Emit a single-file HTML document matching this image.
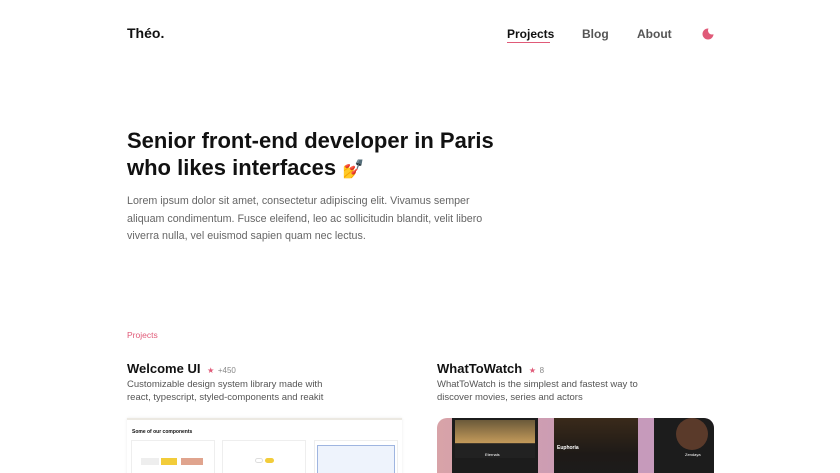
<!DOCTYPE html>
<html><head><meta charset="utf-8"><style>
*{margin:0;padding:0;box-sizing:border-box}
html,body{width:840px;height:473px;overflow:hidden}
body{background:#fff;font-family:"Liberation Sans",sans-serif;color:#111;position:relative}
.a{position:absolute;white-space:nowrap}
.nav{font-size:12px;font-weight:bold;color:#555;top:27px}
</style></head><body>
<div class="a" style="left:127px;top:25px;font-size:14px;font-weight:bold">Théo.</div>
<div class="a nav" style="left:507px;color:#111">Projects</div>
<div class="a" style="left:507px;top:42px;width:43px;height:1px;background:#e05a78"></div>
<div class="a nav" style="left:582px">Blog</div>
<div class="a nav" style="left:637px">About</div>
<svg class="a" style="left:702px;top:27px" width="13" height="13" viewBox="0 0 13 13"><circle cx="6" cy="7" r="5.5" fill="#e05a78"/><circle cx="10" cy="3.5" r="4" fill="#fff"/></svg>
<div class="a" style="left:127px;top:127px;font-size:22px;font-weight:bold;line-height:27px">Senior front-end developer in Paris<br>who likes interfaces <span style="font-size:18px">💅</span></div>
<div class="a" style="left:127px;top:193px;font-size:10.7px;line-height:17.5px;color:#666">Lorem ipsum dolor sit amet, consectetur adipiscing elit. Vivamus semper<br>aliquam condimentum. Fusce eleifend, leo ac sollicitudin blandit, velit libero<br>viverra nulla, vel euismod sapien quam nec lectus.</div>
<div class="a" style="left:127px;top:330px;font-size:8.5px;color:#e05a78">Projects</div>

<div class="a" style="left:127px;top:361px;font-size:13px;font-weight:bold">Welcome UI <span style="font-size:8px;color:#e05a78;font-weight:normal;margin-left:3px">★</span> <span style="font-size:8px;color:#888;font-weight:normal">+450</span></div>
<div class="a" style="left:127px;top:379px;font-size:9.5px;line-height:12.5px;color:#555">Customizable design system library made with<br>react, typescript, styled-components and reakit</div>
<div class="a" style="left:127px;top:418px;width:275px;height:60px;background:#fff;border-top:2px solid #ece9e2;box-shadow:0 0 3px rgba(0,0,0,.08)">
 <div class="a" style="left:5px;top:9px;font-size:5px;font-weight:bold">Some of our components</div>
 <div class="a" style="left:4px;top:20px;width:84px;height:40px;border:1px solid #eee"></div>
 <div class="a" style="left:95px;top:20px;width:84px;height:40px;border:1px solid #eee"></div>
 <div class="a" style="left:187px;top:20px;width:84px;height:40px;border:1px solid #eee"></div>
 <div class="a" style="left:14px;top:38px;width:18px;height:7px;background:#eee"></div>
 <div class="a" style="left:34px;top:38px;width:16px;height:7px;background:#f2cc3a"></div>
 <div class="a" style="left:54px;top:38px;width:22px;height:7px;background:#e0a48e"></div>
 <div class="a" style="left:128px;top:38px;width:8px;height:5px;border:1px solid #ddd;border-radius:3px"></div>
 <div class="a" style="left:138px;top:38px;width:9px;height:5px;background:#f2cc3a;border-radius:3px"></div>
 <div class="a" style="left:190px;top:25px;width:78px;height:35px;background:#eef3fc;border:1px solid #9fb5e0"></div>
</div>

<div class="a" style="left:437px;top:361px;font-size:13px;font-weight:bold">WhatToWatch <span style="font-size:8px;color:#e05a78;font-weight:normal;margin-left:3px">★</span> <span style="font-size:8px;color:#888;font-weight:normal">8</span></div>
<div class="a" style="left:437px;top:379px;font-size:9.5px;line-height:12.5px;color:#555">WhatToWatch is the simplest and fastest way to<br>discover movies, series and actors</div>
<div class="a" style="left:437px;top:418px;width:277px;height:55px;border-radius:10px 10px 0 0;overflow:hidden;background:linear-gradient(90deg,#d8a3a8,#c79ab8 60%,#c59bc0)">
 <div class="a" style="left:15px;top:0;width:86px;height:60px;background:#1c1c1c"></div>
 <div class="a" style="left:18px;top:2px;width:80px;height:38px;background:linear-gradient(#6b5a3a,#c39a5a 60%,#222 62%)"></div>
 <div class="a" style="left:48px;top:34px;font-size:4px;color:#fff">Eternals</div>
 <div class="a" style="left:117px;top:0;width:84px;height:60px;background:linear-gradient(#3a2a1a,#1e1a17 60%,#1c1c1c)"></div>
 <div class="a" style="left:120px;top:27px;font-size:5px;color:#fff;font-weight:bold">Euphoria</div>
 <div class="a" style="left:217px;top:0;width:60px;height:60px;background:#1c1c1c"></div>
 <div class="a" style="left:239px;top:0;width:32px;height:32px;border-radius:50%;background:#5a3a2a"></div>
 <div class="a" style="left:248px;top:34px;font-size:4px;color:#fff">Zendaya</div>
</div>
</body></html>
